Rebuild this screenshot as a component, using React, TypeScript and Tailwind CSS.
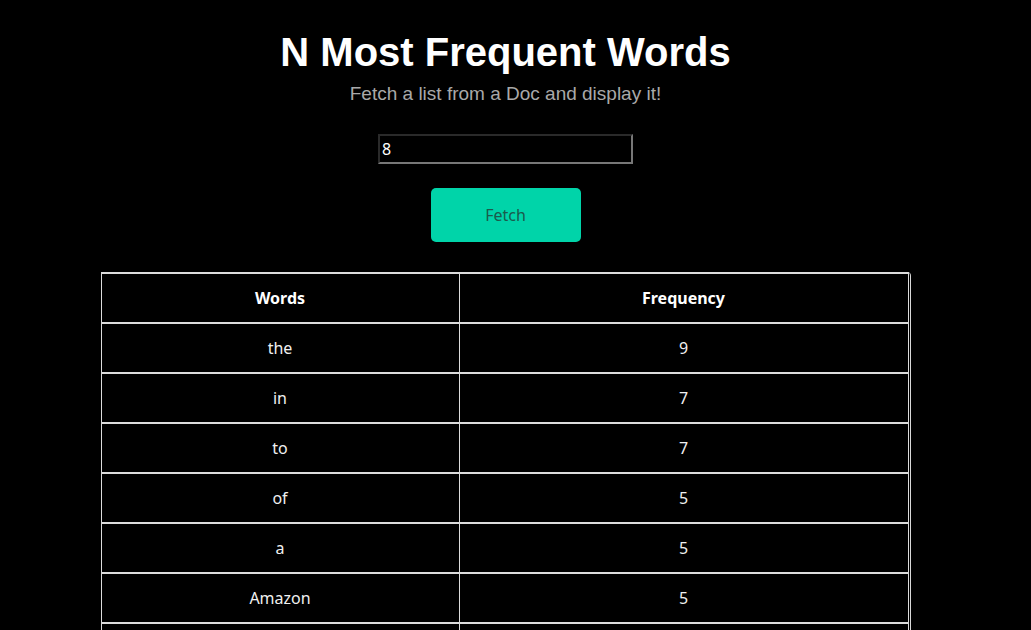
const rows: [string, number][] = [
  ['the', 9],
  ['in', 7],
  ['to', 7],
  ['of', 5],
  ['a', 5],
  ['Amazon', 5],
  ['and', 4],
  ['is', 4],
];

export default function App() {
  return (
    <div className="min-h-screen w-full bg-black text-white font-['Noto_Sans',sans-serif]">
      <div className="w-[1011px] flex flex-col items-center pt-[29px] pb-10">
        <h1 className="text-[40px] leading-[46px] font-bold font-['Liberation_Sans',Arial,sans-serif]">
          N Most Frequent Words
        </h1>
        <p className="mt-[8px] text-[19px] leading-[22px] text-[#a9a9a9] font-['Liberation_Sans',Arial,sans-serif]">
          Fetch a list from a Doc and display it!
        </p>

        <input
          type="text"
          defaultValue="8"
          className="mt-[29px] w-[255px] h-[30px] px-[2px] bg-black text-white text-[16px] border-2 border-t-[#2a2a2a] border-l-[#2a2a2a] border-b-[#777] border-r-[#777] outline-none"
        />

        <button className="mt-[24px] w-[150px] h-[54px] rounded-[5px] bg-[#00d4a9] text-[#1b5a4c] text-[16px]">
          Fetch
        </button>

        <div className="mt-[30px] w-[810px] self-center">
          <div className="border-r border-[#d8d8d8] mt-[3px] rounded-tr">
            <table className="-mt-[3px] w-[808px] border-collapse table-fixed bg-black">
              <colgroup>
                <col className="w-[358px]" />
                <col />
              </colgroup>
              <thead>
                <tr>
                  <th className="h-[50px] border-t-2 border-b-2 border-l border-r border-[#dcdcdc] text-[16px] font-bold">
                    Words
                  </th>
                  <th className="h-[50px] border-t-2 border-b-2 border-r border-[#dcdcdc] text-[16px] font-bold">
                    Frequency
                  </th>
                </tr>
              </thead>
              <tbody>
                {rows.map(([word, freq]) => (
                  <tr key={word}>
                    <td className="h-[50px] border-b-2 border-l border-r border-[#dcdcdc] text-center text-[16px] text-[#f0f0f0]">
                      {word}
                    </td>
                    <td className="h-[50px] border-b-2 border-r border-[#dcdcdc] text-center text-[16px] text-[#f0f0f0]">
                      {freq}
                    </td>
                  </tr>
                ))}
              </tbody>
            </table>
          </div>
        </div>
      </div>
    </div>
  );
}
